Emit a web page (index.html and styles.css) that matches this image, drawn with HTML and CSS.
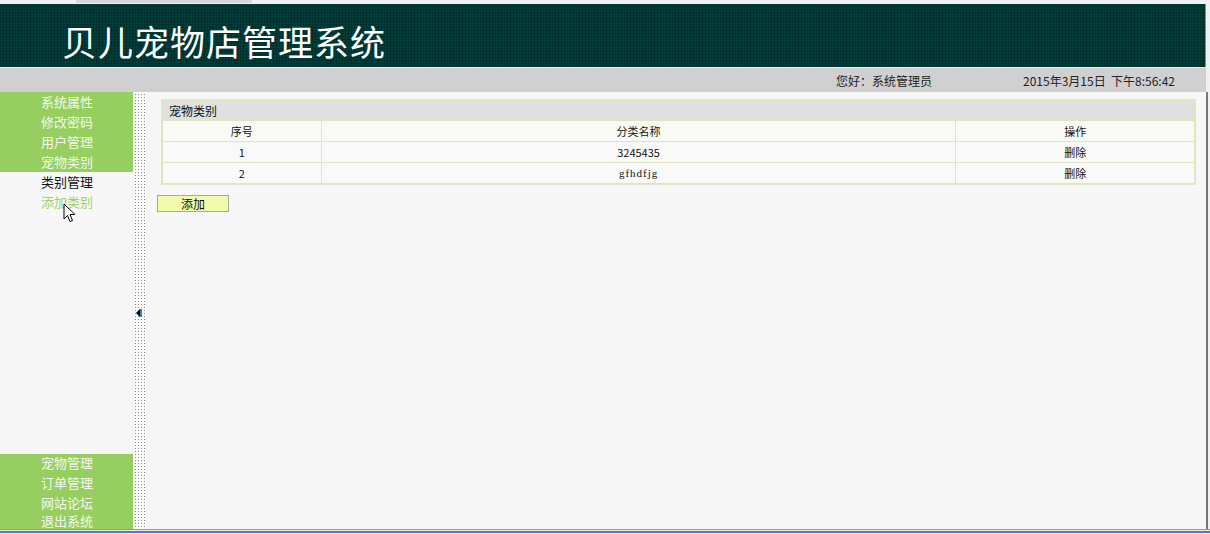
FILE: index.html
```html
<!DOCTYPE html>
<html lang="zh">
<head>
<meta charset="utf-8">
<title>贝儿宠物店管理系统</title>
<link rel="stylesheet" href="styles.css">
</head>
<body>
<div class="page">
  <div class="chrome"><span class="chrome-tab"></span></div>
  <header class="banner">
    <h1 class="title">贝儿宠物店管理系统</h1>
  </header>
  <div class="infobar">
    <span class="hello">您好：系统管理员</span>
    <span class="clock">2015年3月15日&nbsp;&nbsp;下午8:56:42</span>
  </div>
  <div class="body">
    <nav class="sidebar">
      <div class="group">
        <div class="item">系统属性</div>
        <div class="item">修改密码</div>
        <div class="item">用户管理</div>
        <div class="item">宠物类别</div>
      </div>
      <div class="sub">
        <div class="subitem active">类别管理</div>
        <div class="subitem hover">添加类别</div>
      </div>
      <div class="spacer"></div>
      <div class="group bottom">
        <div class="item">宠物管理</div>
        <div class="item">订单管理</div>
        <div class="item">网站论坛</div>
        <div class="item last">退出系统</div>
      </div>
      <svg class="cursor" width="13" height="20" viewBox="0 0 13 20"><path d="M1 1 L1 16 L4.5 12.5 L7 18.5 L9.5 17.5 L7 11.5 L12 11.5 Z" fill="#fff" stroke="#000" stroke-width="1"/></svg>
    </nav>
    <div class="splitter"><span class="arrow"></span></div>
    <main class="main">
      <table class="grid">
        <tr><th class="caption" colspan="3">宠物类别</th></tr>
        <tr class="head"><td class="c1">序号</td><td class="c2">分类名称</td><td class="c3">操作</td></tr>
        <tr><td>1</td><td>3245435</td><td>删除</td></tr>
        <tr><td>2</td><td class="mono">gfhdfjg</td><td>删除</td></tr>
      </table>
      <button class="add">添加</button>
    </main>
    <div class="edge"></div>
  </div>
  <div class="footer"></div>
</div>
</body>
</html>
```
FILE: styles.css
```css
html, body {
  margin: 0;
  padding: 0;
  background: #f0f0f0;
}
.page {
  width: 1210px;
  height: 534px;
  overflow: hidden;
  display: flex;
  flex-direction: column;
  font-family: "Noto Sans CJK SC", "Noto Sans", sans-serif;
  font-size: 12px;
  color: #111;
}
.chrome {
  height: 4px;
  background: #eef0f5;
}
.chrome-tab {
  display: block;
  margin-left: 76px;
  width: 176px;
  height: 3px;
  background: #d6d8de;
}
.banner {
  height: 63px;
  margin-right: 4px;
  background-color: #003e3b;
  background-image:
    repeating-linear-gradient(90deg, rgba(0,0,0,0.18) 0 1px, transparent 1px 3px),
    repeating-linear-gradient(0deg, rgba(0,0,0,0.18) 0 1px, transparent 1px 3px);
  border-right: 1px solid #888;
}
.title {
  margin: 0;
  padding: 17px 0 0 62px;
  font-family: "Noto Sans CJK SC", sans-serif;
  font-weight: 400;
  font-size: 35px;
  line-height: 40px;
  letter-spacing: 1px;
  color: #ffffff;
}
.infobar {
  height: 24px;
  margin-top: 1px;
  margin-right: 4px;
  background: #d0d0d0;
  display: flex;
  align-items: center;
  font-size: 12px;
  color: #222;
}
.hello {
  margin-left: 836px;
}
.clock {
  margin-left: 91px;
}
.body {
  height: 437px;
  display: flex;
}
.sidebar {
  width: 133px;
  background: #f7f7f7;
  display: flex;
  flex-direction: column;
  overflow: hidden;
  position: relative;
}
.group {
  background: #96ce5f;
}
.item {
  height: 20px;
  line-height: 19px;
  padding-left: 41px;
  font-size: 13px;
  color: #f4faee;
}
.sub .subitem {
  height: 20px;
  line-height: 19px;
  padding-left: 41px;
  font-size: 13px;
}
.subitem.active {
  color: #111;
}
.subitem.hover {
  color: #9ed26a;
}
.spacer {
  flex: 1;
}
.group.bottom {
  height: 75px;
  flex: none;
  overflow: hidden;
}
.bottom .item {
  line-height: 18px;
}
.bottom .item.last {
  height: 15px;
  line-height: 14px;
}
.cursor {
  position: absolute;
  left: 63px;
  top: 111px;
}
.splitter {
  width: 13px;
  background-color: #8c8c8c;
  background-image:
    repeating-linear-gradient(90deg, #fafafa 0 2px, transparent 2px 3px),
    repeating-linear-gradient(0deg, #fafafa 0 2px, transparent 2px 3px);
  display: flex;
  align-items: center;
  justify-content: center;
}
.arrow {
  width: 0;
  height: 0;
  margin-top: 4px;
  border-top: 4px solid transparent;
  border-bottom: 4px solid transparent;
  border-right: 4px solid #000;
  margin-left: -4px;
  box-shadow: 2px 0 0 #3a78c8;
}
.main {
  width: 1060px;
  background: #f7f7f7;
  padding: 7px 10px 0 11px;
  box-sizing: border-box;
}
.grid {
  width: 1035px;
  margin-left: 4px;
  border-collapse: collapse;
  border: 2px solid #e0e6c0;
  background: #f9f9f9;
}
.grid th, .grid td {
  height: 20px;
  padding: 0;
  border: 1px solid #dfe5bd;
  text-align: center;
  font-size: 11px;
  font-weight: 400;
  color: #111;
}
.grid th.caption {
  height: 19px;
  background: #e0e0e0;
  text-align: left;
  padding-left: 6px;
  font-size: 12px;
}
.grid .head td {
  background: #fafaf4;
}
.c1 { width: 158px; }
.c2 { width: 635px; }
.c3 { width: 238px; }
.mono {
  font-family: "Liberation Serif", serif;
  letter-spacing: 1px;
}
.add {
  display: block;
  margin-top: 10px;
  width: 72px;
  height: 17px;
  padding: 0;
  border: 1px solid #a8a8a0;
  background: #f2faac;
  font-family: "Noto Sans CJK SC", sans-serif;
  font-size: 12px;
  line-height: 14px;
  color: #111;
  text-align: center;
}
.edge {
  width: 4px;
  background: #f0f0f0;
  border-left: 2px solid #777;
  box-sizing: border-box;
}
.footer {
  height: 4px;
  border-top: 1px solid #999;
  box-sizing: border-box;
  background: linear-gradient(#e8e8e8 0 1px, #4a7ec8 1px);
}
```
